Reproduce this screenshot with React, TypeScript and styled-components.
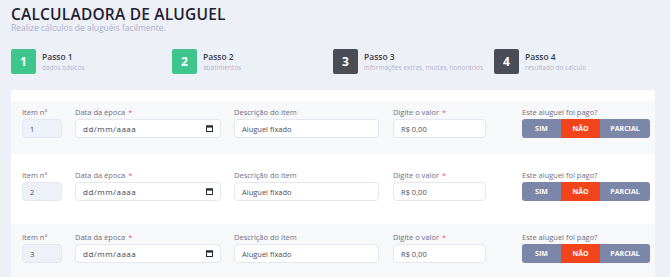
import React from 'react';
import styled, { createGlobalStyle } from 'styled-components';

const GlobalStyle = createGlobalStyle`
  html, body {
    margin: 0;
    padding: 0;
    background: #eef0f8;
    font-family: 'Open Sans', 'Liberation Sans', sans-serif;
  }
`;

const Page = styled.div`
  width: 670px;
  height: 277px;
  overflow: hidden;
  padding: 7px 15px 0 11px;
  box-sizing: border-box;
  background: #eef0f8;
`;

const Title = styled.h1`
  margin: 0;
  font-size: 15.5px;
  font-weight: 600;
  letter-spacing: 0.2px;
  color: #1e2130;
  line-height: 15px;
`;

const Subtitle = styled.p`
  margin: 1px 0 0;
  font-size: 8.5px;
  color: #a9afcb;
  line-height: 10px;
`;

const Steps = styled.div`
  display: flex;
  margin-top: 16px;
`;

const Step = styled.div`
  width: 161px;
  display: flex;
  align-items: center;
  gap: 6px;
`;

const StepBox = styled.div<{ $done?: boolean }>`
  width: 25px;
  height: 25px;
  border-radius: 2px;
  background: ${({ $done }) => ($done ? '#3ec68e' : '#4a4c56')};
  color: #fff;
  font-weight: 700;
  font-size: 12px;
  display: flex;
  align-items: center;
  justify-content: center;
`;

const StepText = styled.div`
  display: flex;
  flex-direction: column;
  gap: 1px;
`;

const StepTitle = styled.span`
  font-size: 8.5px;
  font-weight: 600;
  color: #3a3d4a;
  line-height: 11px;
`;

const StepSub = styled.span`
  font-size: 6.5px;
  color: #b1b5cc;
  line-height: 9px;
`;

const Card = styled.div`
  margin-top: 16px;
  background: #fff;
  border-radius: 3px 3px 0 0;
  padding-top: 11px;
`;

const Row = styled.div<{ $alt?: boolean; $pt: number; $pb: number }>`
  display: flex;
  align-items: flex-start;
  padding: ${({ $pt, $pb }) => `${$pt}px 0 ${$pb}px 11px`};
  background: ${({ $alt }) => ($alt ? '#f7f8fa' : '#fff')};
`;

const Field = styled.div<{ $w: number; $ml?: number }>`
  width: ${({ $w }) => $w}px;
  margin-left: ${({ $ml }) => $ml ?? 0}px;
  display: flex;
  flex-direction: column;
  gap: 3px;
`;

const Label = styled.label`
  font-size: 7.5px;
  color: #6d7083;
  line-height: 8px;
`;

const Req = styled.span`
  color: #f0586e;
  margin-left: 3px;
`;

const Box = styled.div<{ $muted?: boolean }>`
  height: 19px;
  box-sizing: border-box;
  border: 1px solid #e4e6f0;
  border-radius: 4px;
  background: ${({ $muted }) => ($muted ? '#eef1f7' : '#fff')};
  display: flex;
  align-items: center;
  justify-content: space-between;
  padding: 0 7px 0 7px;
  font-size: 7.5px;
  color: #4a4d5c;
`;

const DateText = styled.span`
  font-size: 8px;
  color: #3e4150;
  letter-spacing: 0.5px;
`;

const Toggle = styled.div`
  display: flex;
  height: 19px;
  border-radius: 3px;
  overflow: hidden;
`;

const ToggleBtn = styled.button<{ $active?: boolean; $w: number }>`
  width: ${({ $w }) => $w}px;
  border: none;
  padding: 0;
  background: ${({ $active }) => ($active ? '#f2441a' : '#7b86a9')};
  color: #fff;
  font-family: inherit;
  font-size: 7px;
  font-weight: 700;
`;

const CalendarIcon = () => (
  <svg width="7" height="7" viewBox="0 0 7 7">
    <rect x="0.5" y="0.8" width="6" height="5.7" fill="none" stroke="#2b2d36" strokeWidth="1" />
    <rect x="0.5" y="0.8" width="6" height="1.8" fill="#2b2d36" />
  </svg>
);

const steps = [
  { n: 1, title: 'Passo 1', sub: 'dados básicos', done: true },
  { n: 2, title: 'Passo 2', sub: 'abatimentos', done: true },
  { n: 3, title: 'Passo 3', sub: 'informações extras, multas, honorários', done: false },
  { n: 4, title: 'Passo 4', sub: 'resultado do cálculo', done: false },
];

const rows = [
  { n: 1, alt: true, pt: 7, pb: 16 },
  { n: 2, alt: false, pt: 17, pb: 23 },
  { n: 3, alt: true, pt: 9, pb: 30 },
];

export default function App() {
  return (
    <>
      <GlobalStyle />
      <Page>
        <Title>CALCULADORA DE ALUGUEL</Title>
        <Subtitle>Realize cálculos de aluguéis facilmente.</Subtitle>
        <Steps>
          {steps.map((s) => (
            <Step key={s.n}>
              <StepBox $done={s.done}>{s.n}</StepBox>
              <StepText>
                <StepTitle>{s.title}</StepTitle>
                <StepSub>{s.sub}</StepSub>
              </StepText>
            </Step>
          ))}
        </Steps>
        <Card>
          {rows.map((r) => (
            <Row key={r.n} $alt={r.alt} $pt={r.pt} $pb={r.pb}>
              <Field $w={40}>
                <Label>Item nº</Label>
                <Box $muted>{r.n}</Box>
              </Field>
              <Field $w={146} $ml={13}>
                <Label>
                  Data da época<Req>*</Req>
                </Label>
                <Box>
                  <DateText>dd/mm/aaaa</DateText>
                  <CalendarIcon />
                </Box>
              </Field>
              <Field $w={145} $ml={13}>
                <Label>Descrição do item</Label>
                <Box>Aluguel fixado</Box>
              </Field>
              <Field $w={93} $ml={14}>
                <Label>
                  Digite o valor<Req>*</Req>
                </Label>
                <Box>R$ 0,00</Box>
              </Field>
              <Field $w={128} $ml={36}>
                <Label>Este aluguel foi pago?</Label>
                <Toggle>
                  <ToggleBtn $w={39}>SIM</ToggleBtn>
                  <ToggleBtn $w={39} $active>
                    NÃO
                  </ToggleBtn>
                  <ToggleBtn $w={50}>PARCIAL</ToggleBtn>
                </Toggle>
              </Field>
            </Row>
          ))}
        </Card>
      </Page>
    </>
  );
}
